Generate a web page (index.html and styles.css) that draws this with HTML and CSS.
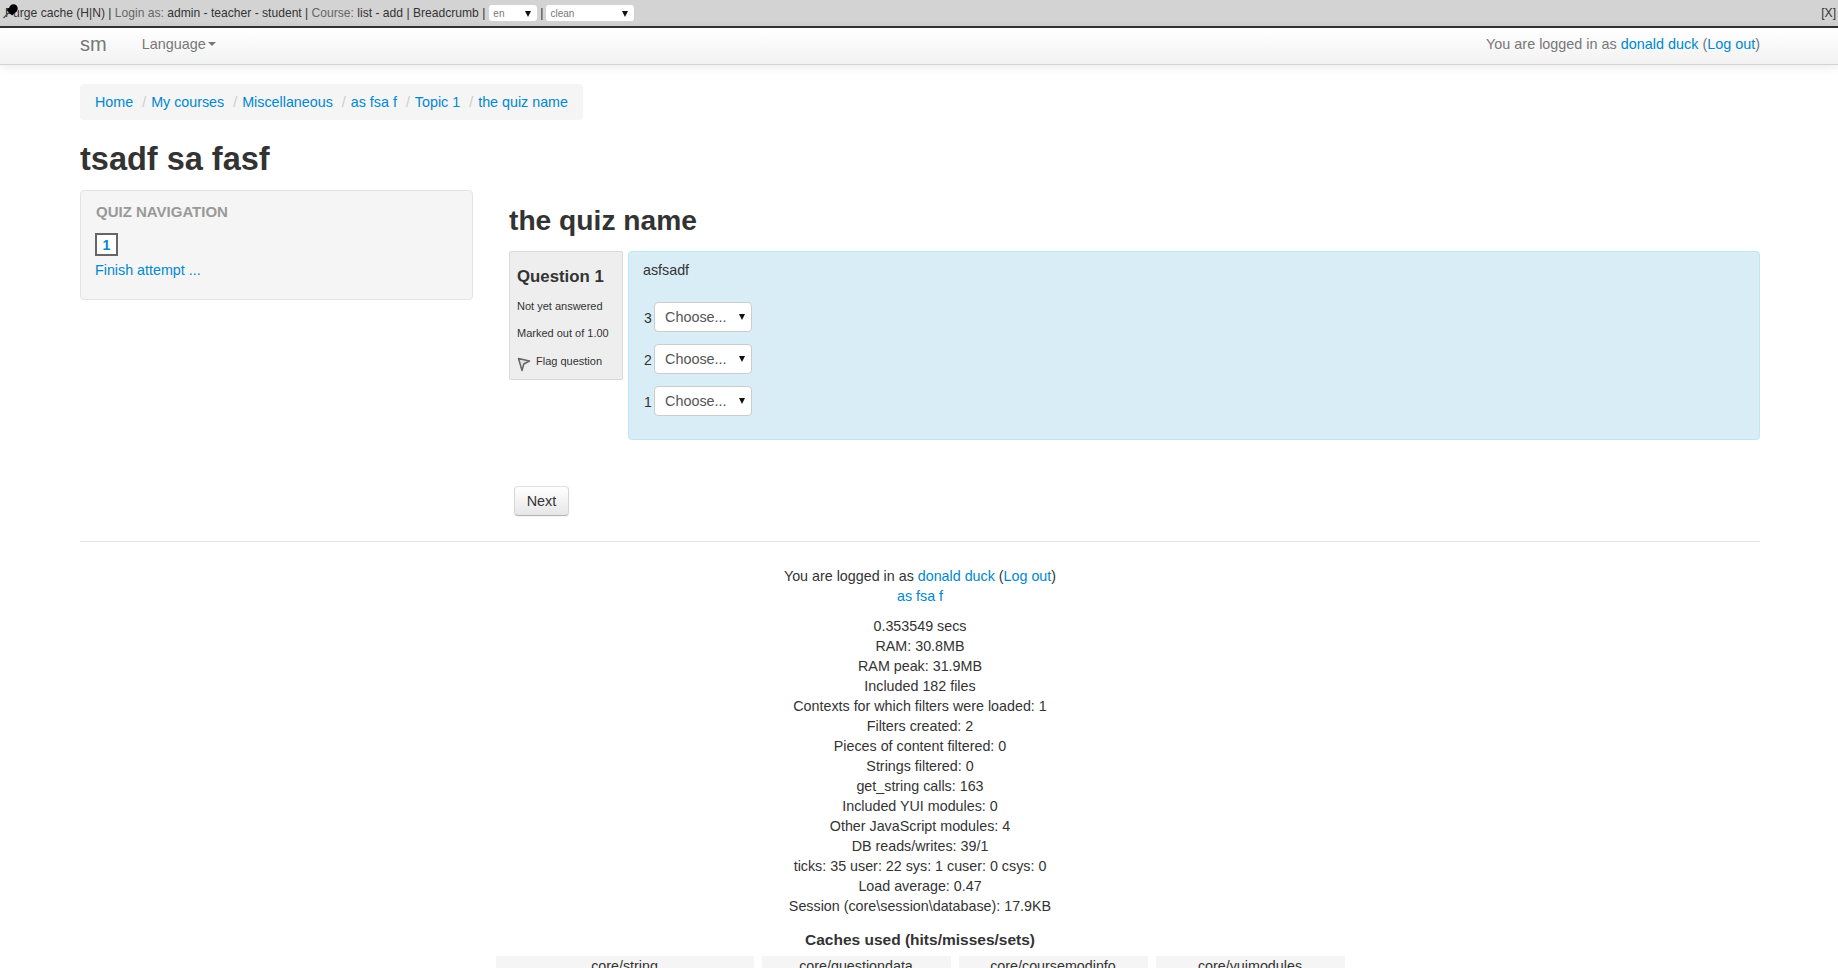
FILE: index.html
```html
<!DOCTYPE html>
<html lang="en">
<head>
<meta charset="utf-8">
<title>the quiz name</title>
<link rel="stylesheet" href="styles.css">
</head>
<body>
<div class="devbar">
  <div class="devbar-left">
    <svg class="pin" width="16" height="20" viewBox="0 0 16 20"><path d="M1.5 18 L7 12.5" stroke="#555" stroke-width="1.4"/><path d="M4.5 10 L10 5.5 L15 11 L10 15.5 Z" fill="#000"/><circle cx="11.5" cy="8.5" r="4.2" fill="#000"/></svg>
    <span><span class="dev">Purge cache (H|N)</span> | <span class="muted">Login as:</span> <span class="dev">admin - teacher - student</span> | <span class="muted">Course:</span> <span class="dev">list - add</span> | <span class="dev">Breadcrumb</span> |</span>
    <span class="minisel sel-en">en<i class="arrow"></i></span>
    <span>|</span>
    <span class="minisel sel-clean">clean<i class="arrow"></i></span>
  </div>
  <span class="dev">[X]</span>
</div>
<nav class="navbar">
  <div class="nav-inner">
    <a class="brand">sm</a>
    <a class="lang">Language<i class="caret"></i></a>
    <div class="login">You are logged in as <a>donald duck</a> (<a>Log out</a>)</div>
  </div>
</nav>
<div class="page">
  <ul class="breadcrumb">
    <li><a>Home</a></li>
    <li><span class="sep">/</span><a>My courses</a></li>
    <li><span class="sep">/</span><a>Miscellaneous</a></li>
    <li><span class="sep">/</span><a>as fsa f</a></li>
    <li><span class="sep">/</span><a>Topic 1</a></li>
    <li><span class="sep">/</span><a>the quiz name</a></li>
  </ul>
  <h1 class="title">tsadf sa fasf</h1>
  <div class="columns">
    <aside class="block">
      <h2 class="block-title">QUIZ NAVIGATION</h2>
      <a class="qnum">1</a>
      <a class="finish">Finish attempt ...</a>
    </aside>
    <main class="main">
      <h2 class="quiz-title">the quiz name</h2>
      <div class="question">
        <div class="info">
          <h3 class="qno">Question 1</h3>
          <p class="state">Not yet answered</p>
          <p class="grade">Marked out of 1.00</p>
          <p class="flag">
            <svg width="16" height="16" viewBox="0 0 16 16"><path d="M1.5 2.5 L12.5 5 L6.8 8 L5 14.5 Z" fill="#e2e2e2" stroke="#666" stroke-width="1.5" stroke-linejoin="round"/></svg>
            <span>Flag question</span>
          </p>
        </div>
        <div class="content">
          <p class="qtext">asfsadf</p>
          <div class="choice"><span class="num">3</span><span class="select">Choose...<i class="arrow"></i></span></div>
          <div class="choice"><span class="num">2</span><span class="select">Choose...<i class="arrow"></i></span></div>
          <div class="choice"><span class="num">1</span><span class="select">Choose...<i class="arrow"></i></span></div>
        </div>
      </div>
      <button class="next" type="button">Next</button>
    </main>
  </div>
  <footer class="footer">
    <div>You are logged in as <a>donald duck</a> (<a>Log out</a>)</div>
    <div><a>as fsa f</a></div>
    <ul class="perf">
      <li>0.353549 secs</li>
      <li>RAM: 30.8MB</li>
      <li>RAM peak: 31.9MB</li>
      <li>Included 182 files</li>
      <li>Contexts for which filters were loaded: 1</li>
      <li>Filters created: 2</li>
      <li>Pieces of content filtered: 0</li>
      <li>Strings filtered: 0</li>
      <li>get_string calls: 163</li>
      <li>Included YUI modules: 0</li>
      <li>Other JavaScript modules: 4</li>
      <li>DB reads/writes: 39/1</li>
      <li>ticks: 35 user: 22 sys: 1 cuser: 0 csys: 0</li>
      <li>Load average: 0.47</li>
      <li>Session (core\session\database): 17.9KB</li>
    </ul>
    <div class="caches-title">Caches used (hits/misses/sets)</div>
    <div class="caches">
      <div class="cache c1">core/string</div>
      <div class="cache c2">core/questiondata</div>
      <div class="cache c2">core/coursemodinfo</div>
      <div class="cache c2">core/yuimodules</div>
    </div>
  </footer>
</div>
</body>
</html>
```
FILE: styles.css
```css
* { box-sizing: border-box; }
html, body { margin: 0; padding: 0; height: 968px; overflow: hidden; }
body { font-family: "Liberation Sans", Arial, sans-serif; font-size: 14.3px; line-height: 20px; color: #333; background: #fff; }
a { color: #0088cc; text-decoration: none; }
ul { list-style: none; margin: 0; padding: 0; }
h1, h2, h3, p { margin: 0; }

.devbar { height: 28px; background: #d3d3d3; border-bottom: 2px solid #333; display: flex; justify-content: space-between; align-items: center; padding: 0 2px 0 5px; font-size: 12.1px; color: #333; }
.devbar-left { display: flex; align-items: center; gap: 3px; position: relative; }
.pin { position: absolute; left: -3px; top: -3px; }
.muted { color: #666; }
.minisel { display: inline-block; position: relative; height: 16px; line-height: 17px; background: #fff; border-radius: 3px; font-size: 10px; color: #777; padding-left: 4px; }
.sel-en { width: 48px; margin-left: 1px; }
.sel-clean { width: 88px; }
.arrow { position: absolute; right: 6px; top: 6px; width: 0; height: 0; border-left: 3px solid transparent; border-right: 3px solid transparent; border-top: 6px solid #111; }

.navbar { height: 37px; background: linear-gradient(#ffffff, #f2f2f2); border-bottom: 1px solid #d4d4d4; box-shadow: 0 1px 10px rgba(0,0,0,.1); }
.nav-inner { display: flex; align-items: center; height: 36px; padding: 0 78px 4px 80px; color: #777; font-size: 14.4px; }
.brand { font-size: 20px; color: #777; margin-right: 35px; }
.lang { color: #777; display: flex; align-items: center; }
.caret { display: inline-block; margin-left: 2px; border-left: 4px solid transparent; border-right: 4px solid transparent; border-top: 4px solid #777; }
.login { margin-left: auto; }

.page { padding: 19px 78px 0 80px; }
.breadcrumb { display: inline-flex; height: 36px; align-items: center; padding: 0 15px; background: #f5f5f5; border-radius: 4px; }
.sep { color: #ccc; padding: 0 5px 0 9px; }
.title { font-size: 32.5px; line-height: 40px; color: #333; margin-top: 19px; }

.columns { display: grid; grid-template-columns: 393px 1fr; column-gap: 36px; margin-top: 11px; }
.block { height: 110px; background: #f5f5f5; border: 1px solid #e3e3e3; border-radius: 4px; padding: 11px 14px; align-self: start; }
.block-title { font-size: 15px; line-height: 20px; color: #999; margin-left: 1px; margin-bottom: 11px; }
.qnum { display: flex; width: 23px; height: 23px; border: 2px solid #666; background: #fff; align-items: center; justify-content: center; font-weight: bold; font-size: 14px; }
.finish { display: block; margin-top: 4px; }

.quiz-title { font-size: 28.2px; line-height: 40px; margin-top: 10px; }
.question { display: flex; gap: 5px; margin-top: 11px; }
.info { width: 114px; height: 129px; background: #eee; border: 1px solid #d9d9d9; border-radius: 2px; padding: 14px 7px; font-size: 11px; line-height: 16px; }
.qno { font-size: 16.8px; line-height: 22px; color: #333; }
.state { margin-top: 10px; }
.grade { margin-top: 11px; }
.flag { margin-top: 12px; display: flex; align-items: flex-start; gap: 3px; }
.flag svg { margin-top: 3px; }
.content { flex: 1; height: 189px; background: #d9edf7; border: 1px solid #bce8f1; border-radius: 4px; padding: 8px 14px; }
.qtext { margin-bottom: 16px; }
.choice { display: flex; align-items: center; height: 42px; margin-left: 1px; }
.choice .num { width: 10px; font-size: 14px; padding-top: 2px; }
.select { position: relative; display: inline-block; width: 98px; height: 30px; background: #fff; border: 1px solid #ccc; border-radius: 4px; line-height: 28px; padding-left: 10px; color: #555; font-size: 14.4px; }
.select .arrow { top: 11px; right: 6px; }

.next { display: block; width: 55px; height: 30px; margin: 46px 0 0 5px; padding: 0; font: 14.4px/20px "Liberation Sans", Arial, sans-serif; color: #333; background: linear-gradient(#ffffff, #e6e6e6); border: 1px solid #ccc; border-color: #e0e0e0 #d6d6d6 #b3b3b3; border-radius: 4px; box-shadow: inset 0 1px 0 rgba(255,255,255,.2), 0 1px 2px rgba(0,0,0,.05); }

.footer { margin-top: 25px; border-top: 1px solid #e5e5e5; padding-top: 24px; text-align: center; }
.perf { margin-top: 10px; }
.caches-title { font-weight: bold; font-size: 15.5px; margin-top: 14px; }
.caches { display: flex; justify-content: center; gap: 8px; margin-top: 6px; }
.cache { background: #f5f5f5; height: 30px; }
.c1 { width: 258px; }
.c2 { width: 189px; }
```
